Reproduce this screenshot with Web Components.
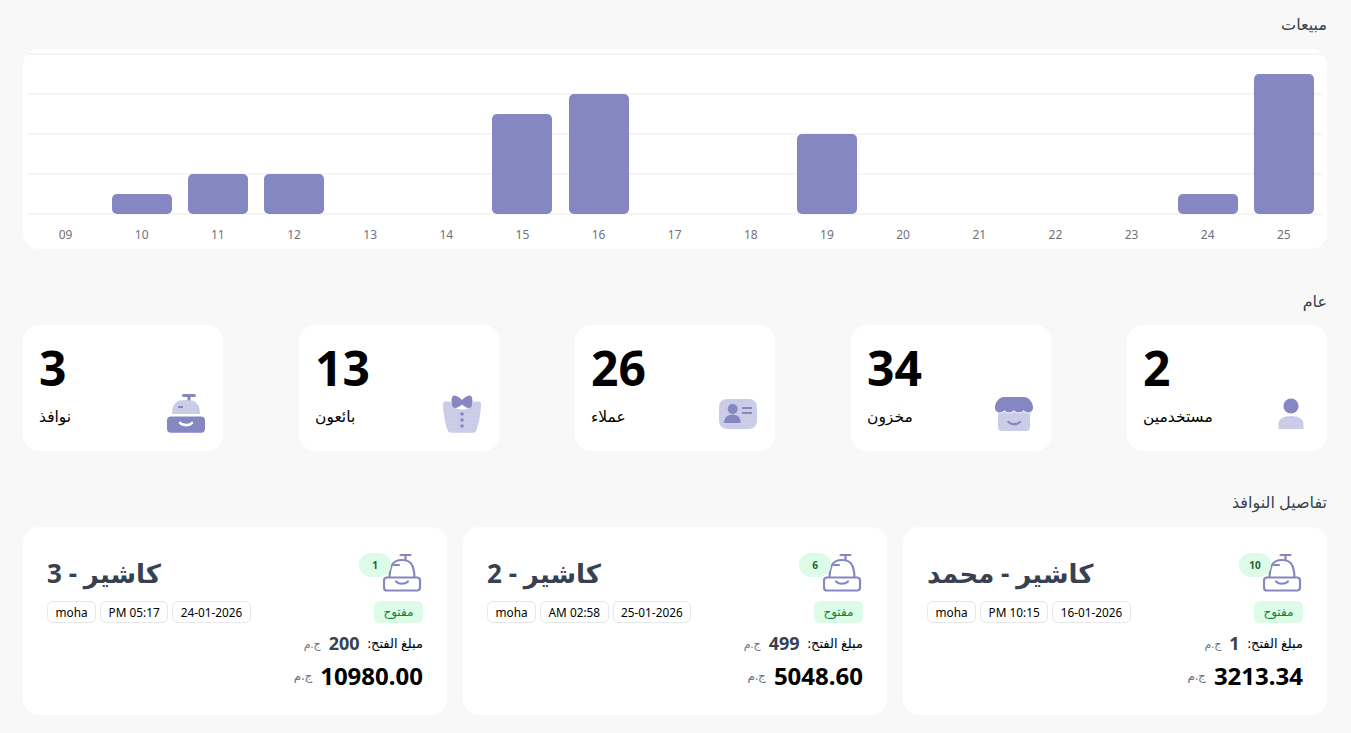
<!DOCTYPE html>
<html lang="ar" dir="rtl">
<head>
<meta charset="utf-8">
<title>لوحة التحكم</title>
<style>
html, body { margin: 0; padding: 0; }
body {
    background: #f8f8f8;
    font-family: "Noto Sans", "Open Sans", "DejaVu Sans", sans-serif;
    color: #000;
    height: 733px;
    overflow: hidden;
}
</style>
</head>
<body>
<dash-board></dash-board>

<script>
// light parts of the duotone icons have a faint dotted texture
const DOTS = `<defs><pattern id="dots" width="4" height="4" patternUnits="userSpaceOnUse">
    <rect width="4" height="4" fill="#c9cbe6"/><circle cx="1" cy="1" r=".55" fill="#e4e5f3"/><circle cx="3" cy="3" r=".45" fill="#dcdeef"/>
</pattern></defs>`;

const ICONS = {
    register: `${DOTS}<path d="M16.500 1.500h11" fill="none" stroke="#8587c2" stroke-width="3" stroke-linecap="round"/>
        <path d="M22 2v5" stroke="#8587c2" stroke-width="3"/>
        <path d="M5 20c0-5 1-9 4-11.500C11 6.700 14 6 19 6s8 .7 10 2.500c3 2.500 4 6.500 4 11.500z" fill="url(#dots)"/>
        <path d="M11 13h5" stroke="#8587c2" stroke-width="2"/>
        <rect x="0" y="22.500" width="38" height="16.200" rx="4" fill="#8587c2"/>
        <path d="M13 29c3 2.800 9.500 2.800 12 0" fill="none" stroke="#fff" stroke-width="2.600" stroke-linecap="round"/>`,
    registerLine: `<path d="M17.500 2h10M22.500 2v5" fill="none" stroke="#8587c2" stroke-width="2.200" stroke-linecap="round"/>
        <path d="M6.500 24c.3-5 .8-9 2.500-12 1.500-3 4-5 10-5s8.500 2 10 5c1.700 3 2.200 7 2.500 12" fill="none" stroke="#8587c2" stroke-width="2.200"/>
        <path d="M11 12h5" stroke="#8587c2" stroke-width="2.200" stroke-linecap="round"/>
        <rect x="1" y="24.500" width="36" height="13" rx="3" fill="none" stroke="#8587c2" stroke-width="2.200"/>
        <path d="M13 28.500c3 3 9 3 12 0" fill="none" stroke="#8587c2" stroke-width="2.200" stroke-linecap="round"/>`,
    vest: `${DOTS}<path d="M0 10c0-2 1.500-2.500 3-2.500h4.500c1 5 5 8 11.500 8s10.500-3 11.500-8H35c1.500 0 3 .5 3 2.500 0 8-2 19-4.500 26-.5 2-2 2.700-3.500 2.700H8c-1.500 0-3-.7-3.500-2.700C2 29 0 18 0 10z" fill="url(#dots)"/>
        <path d="M19 6c-2.500-2.600-5.500-5-8-4.500C9 2 8.500 5 8.500 8c0 3 1 5.500 3 6 2.500.4 5.500-2 7.500-3.500 2 1.500 5 3.900 7.500 3.500 2-.5 3-3 3-6s-.5-6-2.500-6.500C24.500 1 21.500 3.400 19 6z" fill="#8587c2"/>
        <circle cx="19" cy="20" r="1.800" fill="#8587c2"/><circle cx="19" cy="26" r="1.800" fill="#8587c2"/><circle cx="19" cy="32" r="1.800" fill="#8587c2"/>`,
    card: `${DOTS}<rect x="0" y="5" width="38" height="30" rx="8" fill="url(#dots)"/>
        <circle cx="13.700" cy="15" r="5" fill="#8587c2"/>
        <path d="M5 29c0-5 3.500-8.500 8.700-8.500s8 3.500 8 8.500z" fill="#8587c2"/>
        <path d="M23 14h10M23 19h10" stroke="#8587c2" stroke-width="2.200"/>`,
    store: `${DOTS}<rect x="3" y="16" width="32" height="21" rx="4" fill="url(#dots)"/>
        <path d="M9 3h20c5 0 9 5.500 9 10.500 0 3.500-2.300 5-4.700 5-2.100 0-3.700-1-4.800-2.500-1 1.500-2.500 2.500-4.700 2.500S20.500 17.500 19 16c-1.500 1.500-3 2.500-5 2.500s-3.500-1-4.500-2.500c-1.100 1.500-2.700 2.500-4.800 2.500C2.300 18.500 0 17 0 13.500 0 8.500 4 3 9 3z" fill="#8587c2"/>
        <path d="M3.500 19c2 0 4.500-.5 6-2 1 1.500 3 2 4.500 2s3.500-.5 5-2c1.500 1.500 3.500 2 5 2s3.500-.5 4.500-2c1.500 1.500 4 2 6 2" fill="none" stroke="#fff" stroke-width=".8"/>
        <path d="M13.500 28c3 3 8.500 3 11.500 0" fill="none" stroke="#8587c2" stroke-width="2.400" stroke-linecap="round"/>`,
    user: `${DOTS}<circle cx="20" cy="12" r="7.600" fill="#8587c2"/>
        <path d="M7.500 35v-5c0-5 5-8 12.500-8s12.500 3 12.500 8v5z" fill="url(#dots)"/>`
};

class AppIcon extends HTMLElement {
    connectedCallback() {
        this.attachShadow({mode: "open"}).innerHTML = `
        <style>
        :host { display: block; width: 40px; height: 40px; }
        svg { display: block; width: 100%; height: 100%; }
        </style>
        <svg viewBox="0 0 40 40">${ICONS[this.getAttribute("name")]}</svg>`;
    }
}
customElements.define("app-icon", AppIcon);

class SectionTitle extends HTMLElement {
    constructor() {
        super();
        this.attachShadow({mode: "open"}).innerHTML = `
        <style>
        :host { display: block; font-size: 16px; font-weight: 500; line-height: 20px; color: #374151; }
        </style>
        <slot></slot>`;
    }
}
customElements.define("section-title", SectionTitle);

class SalesChart extends HTMLElement {
    connectedCallback() {
        const data = [["09",0],["10",1],["11",2],["12",2],["13",0],["14",0],["15",5],["16",6],["17",0],["18",0],["19",4],["20",0],["21",0],["22",0],["23",0],["24",1],["25",7]];
        const bars = data.map(d => `<div class="col">${d[1] ? `<div class="bar" style="height:${d[1] * 20}px"></div>` : ""}</div>`).join("");
        const labels = data.map(d => `<span>${d[0]}</span>`).join("");
        this.attachShadow({mode: "open"}).innerHTML = `
        <style>
        :host { display: block; direction: ltr; background: #fff; border-radius: 16px; height: 200px; box-sizing: border-box; padding: 4px 5.200px 0 4.500px; margin-top: 15px; }
        .plot {
            height: 162px; padding-bottom: 1px; box-sizing: border-box; display: flex; align-items: stretch;
            background: repeating-linear-gradient(to bottom, #f5f5f6 0, #f5f5f6 2px, transparent 2px, transparent 40px);
        }
        .col { flex: 1; display: flex; align-items: flex-end; justify-content: center; }
        .bar { width: 60px; background: #8587c2; border-radius: 5px; }
        .labels { display: flex; height: 32px; align-items: center; font-size: 12px; color: #71717a; }
        .labels span { flex: 1; text-align: center; padding-top: 6px; }
        </style>
        <div class="plot">${bars}</div>
        <div class="labels">${labels}</div>`;
    }
}
customElements.define("sales-chart", SalesChart);

class StatCard extends HTMLElement {
    connectedCallback() {
        this.attachShadow({mode: "open"}).innerHTML = `
        <style>
        :host { display: block; width: 200px; height: 126px; box-sizing: border-box; background: #fff; border-radius: 16px; padding: 16px 16px 0; direction: rtl; }
        .num { direction: ltr; text-align: left; font-size: 48px; font-weight: 700; line-height: 54px; height: 53px; }
        .foot { display: flex; justify-content: space-between; align-items: center; }
        .lbl { font-size: 15.500px; line-height: 20px; padding-top: 4px; }
        </style>
        <div class="num">${this.getAttribute("value")}</div>
        <div class="foot">
            <app-icon name="${this.getAttribute("icon")}"></app-icon>
            <div class="lbl">${this.getAttribute("label")}</div>
        </div>`;
    }
}
customElements.define("stat-card", StatCard);

class CashCard extends HTMLElement {
    connectedCallback() {
        const a = n => this.getAttribute(n);
        this.attachShadow({mode: "open"}).innerHTML = `
        <style>
        :host { display: block; height: 188px; box-sizing: border-box; background: #fff; border-radius: 16px; padding: 24px; direction: rtl; }
        .head { display: flex; justify-content: space-between; align-items: flex-start; height: 72px; }
        .side { display: flex; flex-direction: column; align-items: flex-start; }
        .icon-wrap { position: relative; height: 50px; width: 40px; }
        .icon-wrap app-icon { margin-top: 2px; }
        .count {
            position: absolute; top: 2px; left: -24px; min-width: 32px; height: 24px; border-radius: 12px;
            background: #dcfce7; color: #166534; font-size: 10px; font-weight: 700; line-height: 24px; text-align: center;
        }
        .status { height: 22px; padding: 0 9.500px; border-radius: 6px; background: #dcfce7; color: #15803d; font-size: 12px; line-height: 22px; }
        .main { display: flex; flex-direction: column; align-items: flex-end; }
        .title { font-size: 26px; font-weight: 700; line-height: 40px; color: #374151; height: 50px; padding-top: 2px; box-sizing: border-box; }
        .chips { display: flex; gap: 4px; }
        .chip { height: 22px; box-sizing: border-box; border: 1px solid #e5e7eb; border-radius: 6px; padding: 0 7.500px; font-size: 11.800px; line-height: 20px; color: #000; }
        .open { display: flex; align-items: center; gap: 8px; height: 22px; margin-top: 9px; font-size: 13px; }
        .open b { font-size: 18px; font-weight: 700; color: #374151; }
        .cur { font-size: 11px; color: #6b7280; }
        .total { display: flex; align-items: center; gap: 8px; height: 32px; margin-top: 5px; }
        .total b { font-size: 24px; font-weight: 700; }
        .total .cur { font-size: 12px; }
        </style>
        <div class="head">
            <div class="side">
                <div class="icon-wrap">
                    <app-icon name="registerLine"></app-icon>
                    <span class="count">${a("count")}</span>
                </div>
                <span class="status">مفتوح</span>
            </div>
            <div class="main">
                <div class="title">${a("name")}</div>
                <div class="chips">
                    <span class="chip">${a("date")}</span>
                    <span class="chip">${a("time")}</span>
                    <span class="chip">${a("user")}</span>
                </div>
            </div>
        </div>
        <div class="open"><span>مبلغ الفتح:</span><b>${a("opening")}</b><span class="cur">ج.م</span></div>
        <div class="total"><b>${a("total")}</b><span class="cur">ج.م</span></div>`;
    }
}
customElements.define("cash-card", CashCard);

class DashBoard extends HTMLElement {
    connectedCallback() {
        this.attachShadow({mode: "open"}).innerHTML = `
        <style>
        :host { display: block; padding: 14px 24px 0 23px; }
        .stats { display: flex; justify-content: space-between; margin-top: 14px; }
        .cards { display: grid; grid-template-columns: repeat(3, 424px); justify-content: space-between; margin-top: 15px; }
        .gap1 { margin-top: 42px; }
        .gap2 { margin-top: 41px; }
        </style>
        <section-title>مبيعات</section-title>
        <sales-chart></sales-chart>
        <section-title class="gap1">عام</section-title>
        <div class="stats">
            <stat-card value="2" label="مستخدمين" icon="user"></stat-card>
            <stat-card value="34" label="مخزون" icon="store"></stat-card>
            <stat-card value="26" label="عملاء" icon="card"></stat-card>
            <stat-card value="13" label="بائعون" icon="vest"></stat-card>
            <stat-card value="3" label="نوافذ" icon="register"></stat-card>
        </div>
        <section-title class="gap2">تفاصيل النوافذ</section-title>
        <div class="cards">
            <cash-card count="10" name="كاشير - محمد" date="16-01-2026" time="10:15 PM" user="moha" opening="1" total="3213.34"></cash-card>
            <cash-card count="6" name="كاشير - 2" date="25-01-2026" time="02:58 AM" user="moha" opening="499" total="5048.60"></cash-card>
            <cash-card count="1" name="كاشير - 3" date="24-01-2026" time="05:17 PM" user="moha" opening="200" total="10980.00"></cash-card>
        </div>`;
    }
}
customElements.define("dash-board", DashBoard);
</script>
</body>
</html>
